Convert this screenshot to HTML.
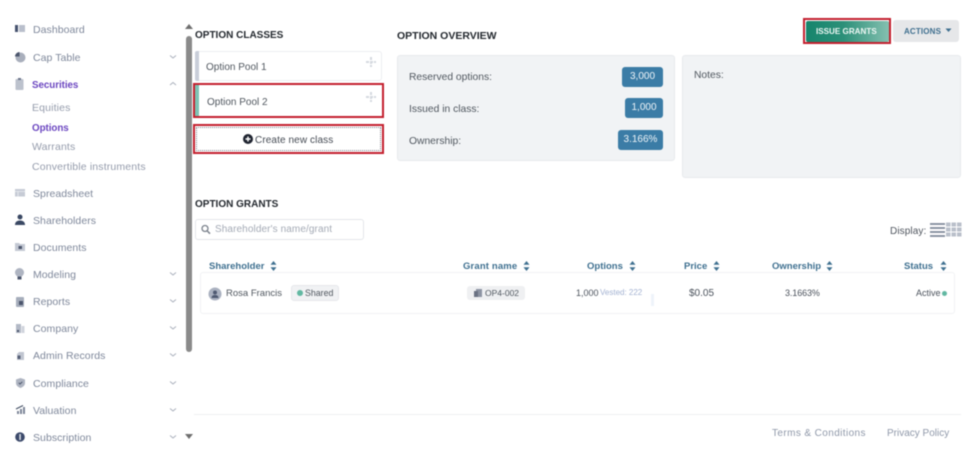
<!DOCTYPE html>
<html><head><meta charset="utf-8">
<style>
html,body{margin:0;padding:0;background:#fff}
#p{position:relative;width:975px;height:449px;overflow:hidden;background:#fff;font-family:"Liberation Sans",sans-serif;filter:blur(.4px)}
#p div,#p span.t,#p svg{position:absolute}
.t{position:absolute;white-space:nowrap;line-height:14px}
.n{left:33px;font-size:10.5px;color:#7f889b;letter-spacing:.05px}
.s{left:32px;font-size:10.5px;color:#959cac;letter-spacing:.15px}
.h{font-size:10px;font-weight:bold;color:#23282e;letter-spacing:0}
.th{font-size:9.5px;font-weight:bold;color:#3f7090;letter-spacing:0}
.l{font-size:10.3px;color:#50575f;letter-spacing:0}
.b{background:#3b7ca6;border-radius:3px;color:#eef4f8;font-size:10px;line-height:20px;height:20px;text-align:center}
.box{background:#f1f3f5;border:1px solid #e8eaed;border-radius:3px;box-sizing:border-box}
.red{border:2px solid #c3202e;box-sizing:border-box}
</style></head><body><div id="p">

<!-- sidebar icons -->
<svg style="left:14px;top:24px" width="12" height="10"><rect x="1" y="1" width="3" height="7" fill="#46526e"/><rect x="5" y="1" width="6" height="7" fill="#b9bfcc"/></svg>
<svg style="left:14px;top:51px" width="12" height="12"><circle cx="6.500" cy="6.500" r="5" fill="#a9afbc"/><path d="M5.500 1A4.500 4.500 0 0 0 1 5.500H5.500Z" fill="#4c566d"/></svg>
<svg style="left:14px;top:77px" width="12" height="14"><rect x="1.500" y="2" width="8" height="11" rx="1" fill="#bcc2cd"/><rect x="4" y="1" width="3" height="2" fill="#6b748a"/></svg>
<svg style="left:14px;top:188px" width="12" height="10"><rect x="1" y="1" width="10" height="7.500" fill="#c6cbd5"/><path d="M1 3.500H11M4 3.500V8.500" stroke="#eceef2" stroke-width=".8"/></svg>
<svg style="left:14px;top:214px" width="12" height="12"><circle cx="6" cy="3" r="2.500" fill="#3a4863"/><path d="M1 11C1 7.500 3.500 6.500 6 6.500S11 7.500 11 11Z" fill="#3a4863"/></svg>
<svg style="left:14px;top:241px" width="12" height="11"><path d="M1 2H5L6 3H11V10H1Z" fill="#c3c8d3"/><rect x="4.500" y="5" width="3.500" height="3" fill="#4c566d"/></svg>
<svg style="left:14px;top:267px" width="12" height="15"><circle cx="5.500" cy="5.500" r="4.500" fill="#aeb4c1"/><rect x="3.500" y="9.500" width="4" height="3" fill="#4c566d"/></svg>
<svg style="left:15px;top:296px" width="11" height="12"><rect x="1" y="1" width="8" height="10" rx="1" fill="#a6adbb"/><rect x="4" y="5" width="4" height="4" fill="#4c566d"/></svg>
<svg style="left:15px;top:323px" width="11" height="11"><rect x="1" y="1" width="5" height="9" fill="#b3b9c6"/><rect x="6.500" y="3" width="3" height="7" fill="#d0d4dc"/><rect x="2" y="7" width="2" height="2" fill="#4c566d"/></svg>
<svg style="left:15px;top:350px" width="11" height="11"><path d="M4 2H9V10H2V4Z" fill="#c0c5d0"/><rect x="2.500" y="5.500" width="3" height="3.500" fill="#566077"/></svg>
<svg style="left:15px;top:377px" width="11" height="12"><path d="M5.500 1L10 2.500V6C10 8.500 8 10 5.500 11C3 10 1 8.500 1 6V2.500Z" fill="#aeb4c1"/><path d="M3.800 5.800L5 7L7.300 4.800" stroke="#4c566d" fill="none"/></svg>
<svg style="left:15px;top:404px" width="11" height="12"><path d="M2 10V7H4V10ZM5 10V5H7V10ZM8 10V3H10V10Z" fill="#7d8698"/><path d="M1 5L8 1.500" stroke="#3f4a60"/></svg>
<svg style="left:14px;top:431px" width="12" height="12"><circle cx="6" cy="6" r="4.800" fill="#3c4a6b"/><rect x="5.300" y="3" width="1.500" height="6" fill="#dfe3ea"/></svg>

<span class="t n" style="top:23px">Dashboard</span>
<span class="t n" style="top:51px">Cap Table</span>
<span class="t n" style="top:79px;left:32px;color:#6b46c0;font-weight:bold;font-size:9.800px;letter-spacing:-.05px">Securities</span>
<span class="t s" style="top:101px">Equities</span>
<span class="t s" style="top:122px;color:#6b46c0;font-weight:bold;font-size:9.800px;letter-spacing:-.05px">Options</span>
<span class="t s" style="top:140px">Warrants</span>
<span class="t s" style="top:160px">Convertible instruments</span>
<span class="t n" style="top:187px">Spreadsheet</span>
<span class="t n" style="top:214px">Shareholders</span>
<span class="t n" style="top:241px">Documents</span>
<span class="t n" style="top:268px">Modeling</span>
<span class="t n" style="top:295px">Reports</span>
<span class="t n" style="top:322px">Company</span>
<span class="t n" style="top:349px">Admin Records</span>
<span class="t n" style="top:377px">Compliance</span>
<span class="t n" style="top:404px">Valuation</span>
<span class="t n" style="top:431px">Subscription</span>

<!-- chevrons -->
<svg style="left:168px;top:54px" width="10" height="6"><path d="M2 1.500L5 4L8 1.500" stroke="#aab0bc" fill="none"/></svg>
<svg style="left:168px;top:81px" width="10" height="6"><path d="M2 4L5 1.500L8 4" stroke="#aab0bc" fill="none"/></svg>
<svg style="left:168px;top:271px" width="10" height="6"><path d="M2 1.500L5 4L8 1.500" stroke="#aab0bc" fill="none"/></svg>
<svg style="left:168px;top:298px" width="10" height="6"><path d="M2 1.500L5 4L8 1.500" stroke="#aab0bc" fill="none"/></svg>
<svg style="left:168px;top:325px" width="10" height="6"><path d="M2 1.500L5 4L8 1.500" stroke="#aab0bc" fill="none"/></svg>
<svg style="left:168px;top:352px" width="10" height="6"><path d="M2 1.500L5 4L8 1.500" stroke="#aab0bc" fill="none"/></svg>
<svg style="left:168px;top:380px" width="10" height="6"><path d="M2 1.500L5 4L8 1.500" stroke="#aab0bc" fill="none"/></svg>
<svg style="left:168px;top:407px" width="10" height="6"><path d="M2 1.500L5 4L8 1.500" stroke="#aab0bc" fill="none"/></svg>
<svg style="left:168px;top:434px" width="10" height="6"><path d="M2 1.500L5 4L8 1.500" stroke="#aab0bc" fill="none"/></svg>

<!-- scrollbar -->
<div style="left:186px;top:36px;width:6px;height:316px;background:#8a8a8a;border-radius:3px"></div>
<svg style="left:184px;top:23px" width="10" height="7"><path d="M1 6L5 1L9 6Z" fill="#6f6f6f"/></svg>
<svg style="left:184px;top:433px" width="10" height="7"><path d="M1 1L5 6L9 1Z" fill="#6f6f6f"/></svg>

<!-- option classes -->
<span class="t h" style="left:195px;top:29px">OPTION CLASSES</span>

<div style="left:195px;top:51px;width:187px;height:30px;background:#fff;border:1px solid #eceef1;border-radius:3px;box-sizing:border-box"></div>
<div style="left:195px;top:51px;width:4px;height:30px;background:#c9ced9;border-radius:2px 0 0 2px"></div>
<span class="t" style="left:206px;top:61px;font-size:10px;color:#50575f">Option Pool 1</span>
<svg style="left:366px;top:57px" width="10" height="10"><path d="M5 0V10M0 5H10" stroke="#d5d9df" stroke-width="2" stroke-dasharray="3 1"/></svg>

<div class="red" style="left:193px;top:83px;width:191px;height:35px"></div>
<div style="left:195px;top:85px;width:4px;height:31px;background:#7cc3b4"></div>
<span class="t" style="left:207px;top:96px;font-size:10px;color:#50575f">Option Pool 2</span>
<svg style="left:366px;top:92px" width="10" height="10"><path d="M5 0V10M0 5H10" stroke="#d5d9df" stroke-width="2" stroke-dasharray="3 1"/></svg>

<div class="red" style="left:193px;top:124px;width:191px;height:30px"></div>
<div style="left:196px;top:127px;width:185px;height:24px;border:1px dotted #7d828c;box-sizing:border-box"></div>
<svg style="left:243px;top:134px" width="10" height="10"><circle cx="5" cy="5" r="5" fill="#1f2430"/><path d="M5 2.500V7.500M2.500 5H7.500" stroke="#fff" stroke-width="1.400"/></svg>
<span class="t" style="left:255px;top:134px;font-size:10px;color:#454b54;letter-spacing:.1px">Create new class</span>

<!-- overview -->
<span class="t h" style="left:397px;top:29px;font-size:10.500px">OPTION OVERVIEW</span>
<div class="box" style="left:397px;top:55px;width:278px;height:106px"></div>
<span class="t l" style="left:409px;top:71px">Reserved options:</span>
<span class="t l" style="left:409px;top:103px">Issued in class:</span>
<span class="t l" style="left:409px;top:135px">Ownership:</span>
<div class="b" style="left:622px;top:67px;width:41px">3,000</div>
<div class="b" style="left:625px;top:98px;width:38px">1,000</div>
<div class="b" style="left:618px;top:130px;width:45px">3.166%</div>

<div class="box" style="left:682px;top:55px;width:279px;height:123px"></div>
<span class="t l" style="left:694px;top:69px">Notes:</span>

<!-- buttons -->
<div class="red" style="left:803px;top:18px;width:88px;height:26px"></div>
<div style="left:806px;top:21px;width:83px;height:21px;background:linear-gradient(90deg,#16856c 0%,#2c9079 45%,#85c0b0 100%);border-radius:2px"></div>
<span class="t" style="left:816px;top:25px;font-size:8.100px;font-weight:bold;color:#eef7f4">ISSUE GRANTS</span>
<div style="left:893px;top:20px;width:66px;height:22px;background:#e6e7e9;border-radius:3px"></div>
<span class="t" style="left:904px;top:25px;font-size:8px;font-weight:bold;color:#3f6f8f;letter-spacing:.15px">ACTIONS</span>
<svg style="left:945px;top:28px" width="7" height="5"><path d="M.5 .5H6.500L3.500 4Z" fill="#3f6f8f"/></svg>

<!-- grants -->
<span class="t h" style="left:195px;top:198px">OPTION GRANTS</span>
<div style="left:195px;top:219px;width:169px;height:21px;border:1px solid #e4e6ea;border-radius:3px;box-sizing:border-box"></div>
<svg style="left:201px;top:224px" width="10" height="11"><circle cx="4" cy="4.500" r="3" stroke="#7b828c" stroke-width="1.300" fill="none"/><path d="M6.300 7L9 9.700" stroke="#7b828c" stroke-width="1.500"/></svg>
<span class="t" style="left:215px;top:223px;font-size:10px;color:#a4aab5;letter-spacing:.1px">Shareholder's name/grant</span>

<span class="t" style="left:890px;top:225px;font-size:10px;color:#4f555e;letter-spacing:.1px">Display:</span>
<svg style="left:930px;top:222px" width="15" height="15"><path d="M0 2H15M0 6H15M0 10H15M0 14H15" stroke="#7e8798" stroke-width="1.700"/></svg>
<svg style="left:946px;top:222px" width="16" height="15"><path d="M0 .5H4.500V4.500H0ZM5.500 .5H10V4.500H5.500ZM11 .5H15.500V4.500H11ZM0 5.500H4.500V9.500H0ZM5.500 5.500H10V9.500H5.500ZM11 5.500H15.500V9.500H11ZM0 10.500H4.500V14.500H0ZM5.500 10.500H10V14.500H5.500ZM11 10.500H15.500V14.500H11Z" fill="#b9bfca"/></svg>

<span class="t th" style="left:209px;top:260px">Shareholder</span>
<span class="t th" style="left:463px;top:260px;letter-spacing:.15px">Grant name</span>
<span class="t th" style="left:587px;top:260px">Options</span>
<span class="t th" style="left:684px;top:260px">Price</span>
<span class="t th" style="left:772px;top:260px">Ownership</span>
<span class="t th" style="left:904px;top:260px">Status</span>
<svg style="left:270px;top:261px" width="7" height="10"><path d="M3.500 0L6.500 3.800H.5ZM3.500 10L.5 6.200H6.500Z" fill="#3f7090"/></svg>
<svg style="left:523px;top:261px" width="7" height="10"><path d="M3.500 0L6.500 3.800H.5ZM3.500 10L.5 6.200H6.500Z" fill="#3f7090"/></svg>
<svg style="left:629px;top:261px" width="7" height="10"><path d="M3.500 0L6.500 3.800H.5ZM3.500 10L.5 6.200H6.500Z" fill="#3f7090"/></svg>
<svg style="left:713px;top:261px" width="7" height="10"><path d="M3.500 0L6.500 3.800H.5ZM3.500 10L.5 6.200H6.500Z" fill="#3f7090"/></svg>
<svg style="left:826px;top:261px" width="7" height="10"><path d="M3.500 0L6.500 3.800H.5ZM3.500 10L.5 6.200H6.500Z" fill="#3f7090"/></svg>
<svg style="left:940px;top:261px" width="7" height="10"><path d="M3.500 0L6.500 3.800H.5ZM3.500 10L.5 6.200H6.500Z" fill="#3f7090"/></svg>

<div style="left:200px;top:272px;width:755px;height:42px;background:#fff;border:1px solid #f1f2f4;border-radius:3px;box-sizing:border-box"></div>
<svg style="left:208px;top:287px" width="14" height="14"><circle cx="7" cy="7" r="6.500" fill="#aab1c0"/><circle cx="7" cy="5.500" r="2" fill="#4f5a72"/><path d="M3.500 11C3.500 8.800 5 8 7 8S10.500 8.800 10.500 11Z" fill="#4f5a72"/></svg>
<span class="t" style="left:226px;top:287px;font-size:9.500px;color:#50575f">Rosa Francis</span>
<div style="left:291px;top:285px;width:48px;height:16px;background:#f1f2f4;border:1px solid #e6e8eb;border-radius:3px;box-sizing:border-box"></div>
<div style="left:297px;top:290px;width:6px;height:6px;border-radius:50%;background:#62b8a2"></div>
<span class="t" style="left:305px;top:286px;font-size:8.800px;color:#50575f">Shared</span>

<div style="left:467px;top:286px;width:58px;height:14px;background:#eff0f2;border-radius:3px"></div>
<svg style="left:473px;top:288px" width="10" height="10"><rect x="3" y="1" width="6" height="8" fill="#8d94a3"/><rect x="1" y="3" width="4" height="6" fill="#6a7283"/></svg>
<span class="t" style="left:485px;top:286px;font-size:8.500px;color:#50575f">OP4-002</span>

<span class="t" style="left:576px;top:286px;font-size:9px;color:#4b525c">1,000</span>
<span class="t" style="left:600px;top:286px;font-size:8px;color:#a3b2d2">Vested: 222</span>
<div style="left:651px;top:294px;width:3px;height:12px;background:#eef3fa"></div>
<span class="t" style="left:689px;top:287px;font-size:10px;color:#4b525c">$0.05</span>
<span class="t" style="left:785px;top:286px;font-size:9px;color:#4b525c;letter-spacing:-.1px">3.1663%</span>
<span class="t" style="left:916px;top:286px;font-size:9px;color:#4b525c">Active</span>
<div style="left:942px;top:291px;width:5px;height:5px;border-radius:50%;background:#62b8a2"></div>

<!-- footer -->
<div style="left:194px;top:414px;width:767px;height:1px;background:#eeeff1"></div>
<span class="t" style="left:772px;top:427px;font-size:10px;color:#8f98a9;letter-spacing:.4px">Terms &amp; Conditions</span>
<span class="t" style="left:887px;top:427px;font-size:10px;color:#8f98a9">Privacy Policy</span>

</div></body></html>
